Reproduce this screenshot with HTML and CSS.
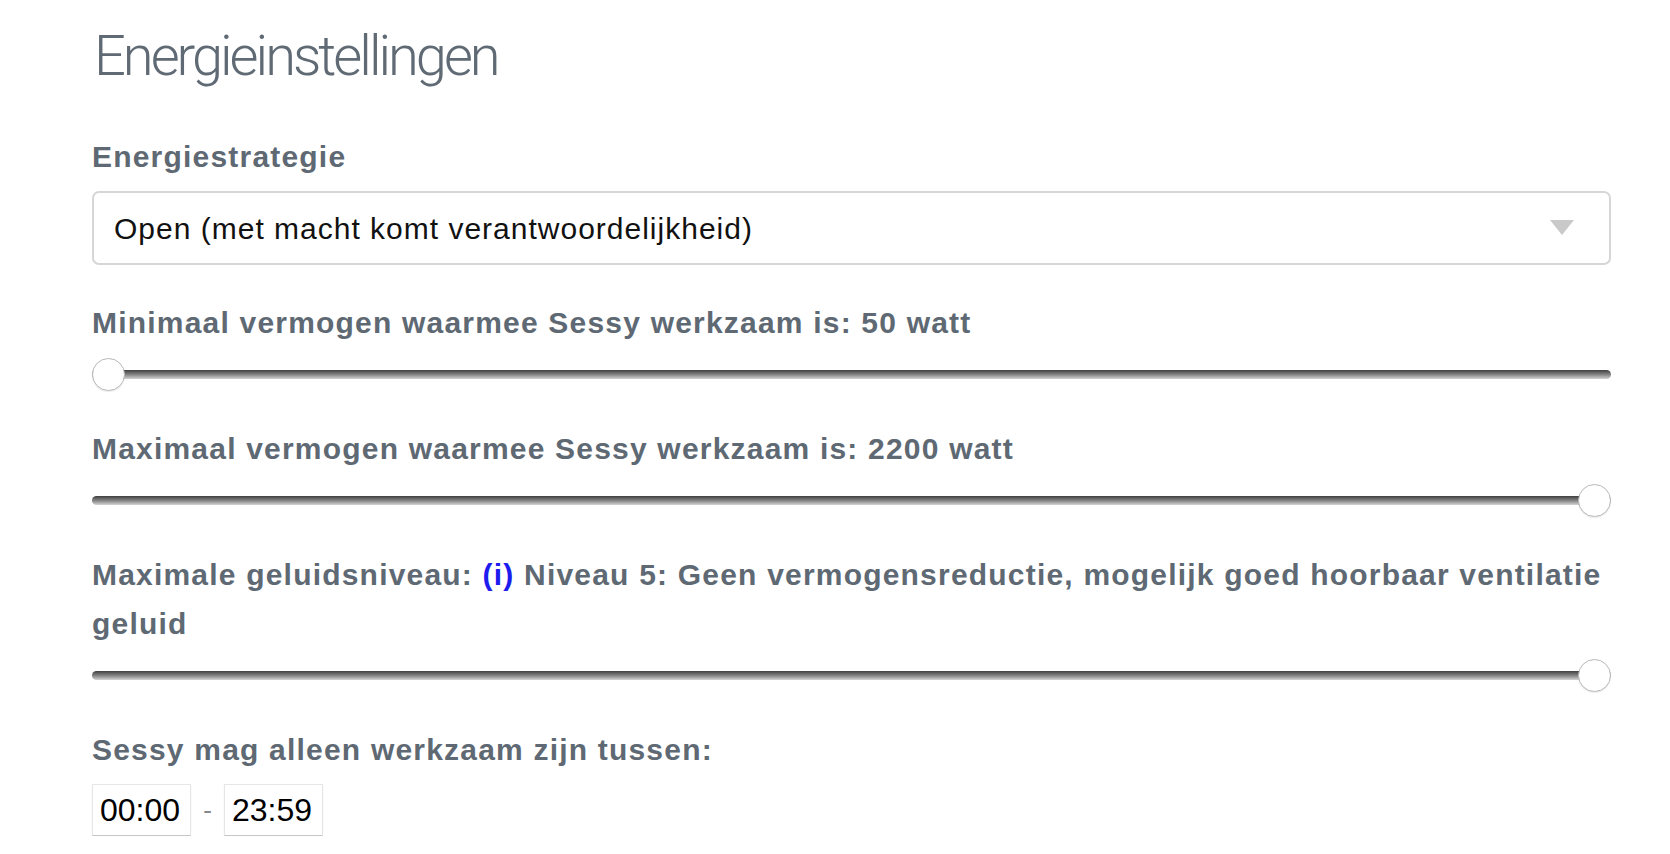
FILE: index.html
```html
<!DOCTYPE html>
<html lang="nl">
<head>
    <meta charset="UTF-8">
    <meta name="viewport" content="width=device-width, initial-scale=1.0">
    <title>Energieinstellingen</title>
    <link rel="stylesheet" href="styles.css">
</head>
<body>
    <div class="container">
        <h1>Energieinstellingen</h1>

        <div class="field">
            <label for="strategy">Energiestrategie</label>
            <div class="select-wrap">
                <select id="strategy">
                    <option selected>Open (met macht komt verantwoordelijkheid)</option>
                    <option>Automatisch</option>
                    <option>Handmatig</option>
                </select>
                <svg class="select-arrow" width="24" height="15" viewBox="0 0 24 15">
                    <polygon points="0,0 24,0 12,15" fill="#c9c9c9"/>
                </svg>
            </div>
        </div>

        <div class="field">
            <label for="minPower">Minimaal vermogen waarmee Sessy werkzaam is: 50 watt</label>
            <input type="range" id="minPower" min="50" max="2200" step="50" value="50">
        </div>

        <div class="field">
            <label for="maxPower">Maximaal vermogen waarmee Sessy werkzaam is: 2200 watt</label>
            <input type="range" id="maxPower" min="50" max="2200" step="50" value="2200">
        </div>

        <div class="field">
            <label for="noise">Maximale geluidsniveau: <a href="#" class="info">(i)</a> Niveau 5: Geen vermogensreductie, mogelijk goed hoorbaar ventilatie geluid</label>
            <input type="range" id="noise" min="1" max="5" step="1" value="5">
        </div>

        <div class="field">
            <label for="timeFrom">Sessy mag alleen werkzaam zijn tussen:</label>
            <div class="time-group">
                <input type="text" id="timeFrom" class="time" value="00:00">
                <span class="dash">-</span>
                <input type="text" id="timeTo" class="time" value="23:59">
            </div>
        </div>
    </div>
</body>
</html>
```

FILE: styles.css
```css
body {
    font-family: "Liberation Sans", Arial, sans-serif;
    background: #fff;
    margin: 0;
    padding: 0;
}
.container {
    width: 1519px;
    padding: 0 0 0 92px;
}
h1 {
    font-family: Roboto, "Liberation Sans", sans-serif;
    font-weight: 300;
    font-size: 56px;
    letter-spacing: -3px;
    line-height: 66px;
    color: #5f6a74;
    margin: 0;
    padding: 23px 0 0 2px;
}
.field {
    margin-top: 33px;
}
h1 + .field {
    margin-top: 43px;
}
label {
    display: block;
    font-weight: bold;
    font-size: 30px;
    letter-spacing: 1.2px;
    line-height: 49px;
    color: #5e6973;
    margin-bottom: 10px;
}
.info {
    color: #1c1cee;
    text-decoration: none;
}
.select-wrap {
    position: relative;
}
select {
    -webkit-appearance: none;
    appearance: none;
    width: 100%;
    height: 74px;
    padding: 0 60px 0 20px;
    border: 2px solid #d6d6d6;
    border-radius: 7px;
    background: #fff;
    font-family: "Liberation Sans", Arial, sans-serif;
    font-size: 30px;
    letter-spacing: 1px;
    color: #111;
}
select:focus {
    outline: none;
}
.select-arrow {
    position: absolute;
    right: 37px;
    top: 29px;
    pointer-events: none;
}
input[type=range] {
    -webkit-appearance: none;
    appearance: none;
    display: block;
    width: 100%;
    height: 34px;
    margin: 0;
    background: transparent;
}
input[type=range]::-webkit-slider-runnable-track {
    height: 9px;
    border-radius: 5px;
    background: linear-gradient(#3f3f3f, #8a8a8a 55%, #d4d4d4);
}
input[type=range]::-webkit-slider-thumb {
    -webkit-appearance: none;
    width: 33px;
    height: 33px;
    margin-top: -12px;
    border-radius: 50%;
    background: #fff;
    border: 1px solid #b9b9b9;
    box-shadow: 0 1px 1px rgba(0, 0, 0, 0.08);
}
.time-group {
    display: flex;
    align-items: center;
    margin-top: 0;
}
.time {
    width: 99px;
    height: 52px;
    box-sizing: border-box;
    padding: 0 0 0 7px;
    border: 1px solid #e6e6e6;
    border-bottom-color: #c6c6c6;
    box-shadow: 0 1px 1px rgba(0, 0, 0, 0.1);
    font-family: "Liberation Sans", Arial, sans-serif;
    font-size: 32px;
    color: #000;
    background: #fff;
}
.time:focus {
    outline: none;
}
.dash {
    width: 33px;
    text-align: center;
    font-size: 26px;
    color: #888;
}
```
